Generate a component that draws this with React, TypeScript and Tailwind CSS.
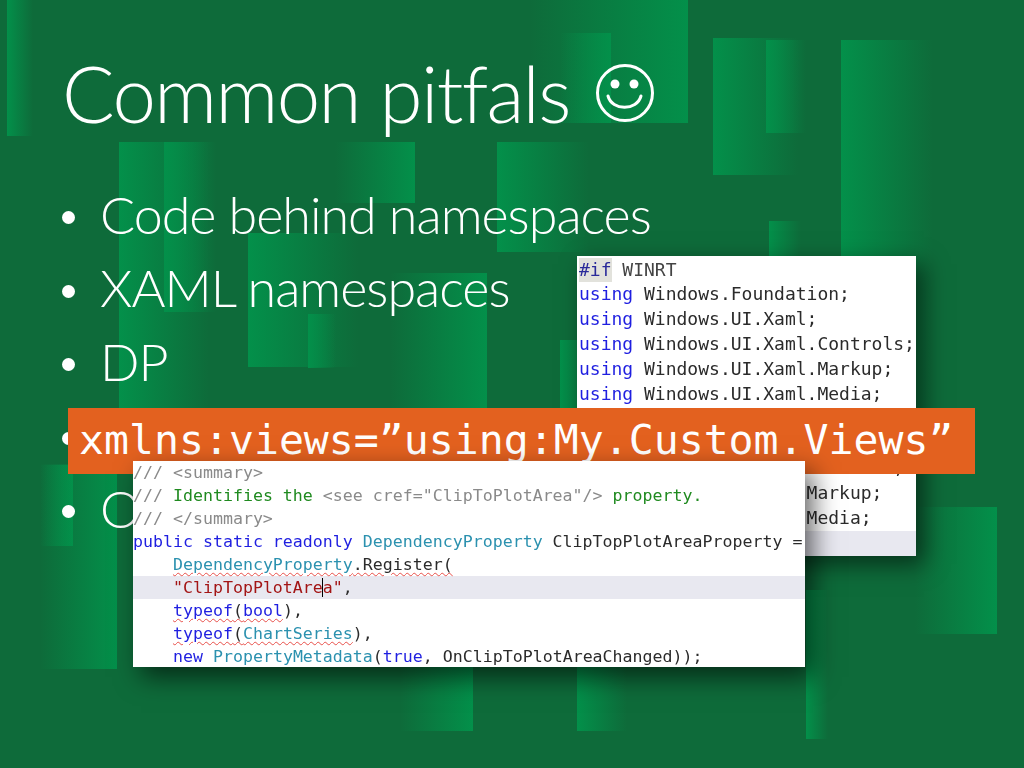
import React from 'react';

type Token = { t: string; c?: string; wavy?: boolean };

const KEY = 'text-[#1f1fe0]';
const TYPE = 'text-[#2b91af]';
const DOC = 'text-[#8a8a8a]';
const NOTE = 'text-[#1f8a1f]';
const STR = 'text-[#a31515]';

// [x, y, w, h, gradient]
const blocks: [number, number, number, number, 'l' | 'r'][] = [
  [7, 0, 26, 136, 'l'],
  [119, 142, 90, 323, 'l'],
  [164, 142, 52, 170, 'l'],
  [335, 142, 80, 61, 'r'],
  [497, 142, 92, 110, 'l'],
  [248, 233, 110, 134, 'l'],
  [390, 273, 97, 135, 'r'],
  [308, 314, 28, 54, 'l'],
  [530, 0, 158, 123, 'r'],
  [560, 33, 51, 90, 'r'],
  [560, 340, 40, 80, 'l'],
  [713, 38, 85, 137, 'l'],
  [766, 40, 40, 93, 'l'],
  [841, 40, 92, 430, 'l'],
  [769, 221, 32, 60, 'l'],
  [915, 507, 82, 127, 'r'],
  [806, 590, 22, 149, 'l'],
  [40, 465, 33, 81, 'r'],
  [40, 464, 77, 205, 'r'],
  [400, 640, 73, 91, 'r'],
  [577, 640, 50, 91, 'l'],
];

const backLines: Token[][] = [
  [{ t: '#if', c: 'inline-block h-[24px] text-[#2a2a9a] bg-[#e2e2dc]' }, { t: ' WINRT', c: 'text-[#444]' }],
  [{ t: 'using', c: KEY }, { t: ' Windows.Foundation;' }],
  [{ t: 'using', c: KEY }, { t: ' Windows.UI.Xaml;' }],
  [{ t: 'using', c: KEY }, { t: ' Windows.UI.Xaml.Controls;' }],
  [{ t: 'using', c: KEY }, { t: ' Windows.UI.Xaml.Markup;' }],
  [{ t: 'using', c: KEY }, { t: ' Windows.UI.Xaml.Media;' }],
  [{ t: '#else', c: KEY }],
  [{ t: 'using', c: KEY }, { t: ' System.Windows;' }],
  [{ t: 'using', c: KEY }, { t: ' System.Windows.Controls;' }],
  [{ t: 'using', c: KEY }, { t: ' System.Windows.Markup;' }],
  [{ t: 'using', c: KEY }, { t: ' System.Windows.Media;' }],
];

const frontLines: Token[][] = [
  [{ t: '/// <summary>', c: DOC }],
  [
    { t: '///', c: DOC },
    { t: ' Identifies the ', c: NOTE },
    { t: '<see cref="ClipToPlotArea"/>', c: DOC },
    { t: ' property.', c: NOTE },
  ],
  [{ t: '/// </summary>', c: DOC }],
  [
    { t: 'public static readonly', c: KEY },
    { t: ' ' },
    { t: 'DependencyProperty', c: TYPE },
    { t: ' ClipTopPlotAreaProperty =' },
  ],
  [
    { t: '    ' },
    { t: 'DependencyProperty', c: TYPE, wavy: true },
    { t: '.Register(', wavy: true },
  ],
];

const frontRest: Token[][] = [
  [{ t: '    ' }, { t: 'typeof', c: KEY, wavy: true }, { t: '(', wavy: true }, { t: 'bool', c: KEY, wavy: true }, { t: '),' }],
  [{ t: '    ' }, { t: 'typeof', c: KEY, wavy: true }, { t: '(', wavy: true }, { t: 'ChartSeries', c: TYPE, wavy: true }, { t: '),' }],
  [
    { t: '    ' },
    { t: 'new', c: KEY },
    { t: ' ' },
    { t: 'PropertyMetadata', c: TYPE },
    { t: '(' },
    { t: 'true', c: KEY },
    { t: ', OnClipToPlotAreaChanged));' },
  ],
];

const Code: React.FC<{ tokens: Token[] }> = ({ tokens }) => (
  <>
    {tokens.map((tok, i) => (
      <span
        key={i}
        className={`${tok.c ?? ''} ${tok.wavy ? 'underline decoration-wavy decoration-[#e8504a] decoration-1 underline-offset-2' : ''}`}
      >
        {tok.t}
      </span>
    ))}
  </>
);

const Bullet: React.FC<{ children?: React.ReactNode }> = ({ children }) => (
  <li className="flex items-center h-[73.5px]">
    <span className="w-[13px] h-[13px] mt-[8px] rounded-full bg-white shrink-0" />
    <span className="ml-[25px] whitespace-pre">{children}</span>
  </li>
);

export default function App() {
  return (
    <div className="relative w-[1024px] h-[768px] overflow-hidden bg-[#0e6b3a] text-white font-['Lato',sans-serif] font-light">
      <svg className="absolute inset-0" width="1024" height="768" viewBox="0 0 1024 768">
        <defs>
          <linearGradient id="fade-l" x1="0" x2="1" y1="0" y2="0">
            <stop offset="0" stopColor="#03904a" />
            <stop offset="1" stopColor="#03904a" stopOpacity="0" />
          </linearGradient>
          <linearGradient id="fade-r" x1="1" x2="0" y1="0" y2="0">
            <stop offset="0" stopColor="#03904a" />
            <stop offset="1" stopColor="#03904a" stopOpacity="0" />
          </linearGradient>
        </defs>
        {blocks.map(([x, y, w, h, dir], i) => (
          <rect key={i} x={x} y={y} width={w} height={h} fill={dir === 'l' ? 'url(#fade-l)' : 'url(#fade-r)'} />
        ))}
      </svg>

      <div className="relative pl-[62px]">
        <h1 className="flex items-center h-[142px] pt-[44px] text-[78px] tracking-[-1.6px] leading-none">
          Common pitfals
          <svg className="ml-[25px]" width="60" height="60" viewBox="0 0 60 60" fill="none" stroke="white">
            <circle cx="30" cy="30" r="27.5" strokeWidth="3" />
            <circle cx="20" cy="21" r="4.5" fill="white" stroke="none" />
            <circle cx="39" cy="21" r="4.5" fill="white" stroke="none" />
            <path d="M13 33 C17 48 42 48 46 33" strokeWidth="3" strokeLinecap="round" />
          </svg>
        </h1>
        <ul className="pt-[35px] text-[52px] tracking-[-1px] leading-none">
          <Bullet>Code behind namespaces</Bullet>
          <Bullet>XAML namespaces</Bullet>
          <Bullet>DP</Bullet>
          <Bullet> </Bullet>
          <Bullet>O</Bullet>
        </ul>
      </div>

      {/* pasted screenshots and the callout lie over the bullet list */}
      <div className="absolute left-[577px] top-[256px] w-[339px] h-[300px] pt-[1.6px] bg-white text-[18px] font-normal text-[#2b2b2b] font-['DejaVu_Sans_Mono',monospace] shadow-[8px_8px_22px_rgba(0,0,0,0.55)] overflow-hidden blur-[0.3px]">
        {backLines.map((line, i) => (
          <div key={i} className="h-[24.85px] leading-[24.85px] pl-[2px] whitespace-pre">
            <Code tokens={line} />
          </div>
        ))}
        <div className="h-[25px] bg-[#e8e8f0]" />
      </div>

      <div className="absolute left-[68px] top-[408px] w-[907px] h-[66px] pl-[11px] bg-[#e3611f] text-[41.5px] leading-[63px] font-normal font-['DejaVu_Sans_Mono',monospace] whitespace-pre">
        xmlns:views=”using:My.Custom.Views”
      </div>

      <div className="absolute left-[133px] top-[461px] w-[672px] h-[206px] bg-white text-[16.6px] font-normal text-[#2b2b2b] font-['DejaVu_Sans_Mono',monospace] shadow-[8px_10px_24px_rgba(0,0,0,0.6)] overflow-hidden blur-[0.3px]">
        {frontLines.map((line, i) => (
          <div key={i} className="h-[23px] leading-[23px] whitespace-pre">
            <Code tokens={line} />
          </div>
        ))}
        <div className="h-[23px] leading-[23px] whitespace-pre bg-[#e8e8f0]">
          <span>    </span>
          <span className={STR}>"ClipTopPlotAre</span>
          <span className={`${STR} border-l border-black -ml-px`}>a"</span>
          <span>,</span>
        </div>
        {frontRest.map((line, i) => (
          <div key={i} className="h-[23px] leading-[23px] whitespace-pre">
            <Code tokens={line} />
          </div>
        ))}
      </div>
    </div>
  );
}
